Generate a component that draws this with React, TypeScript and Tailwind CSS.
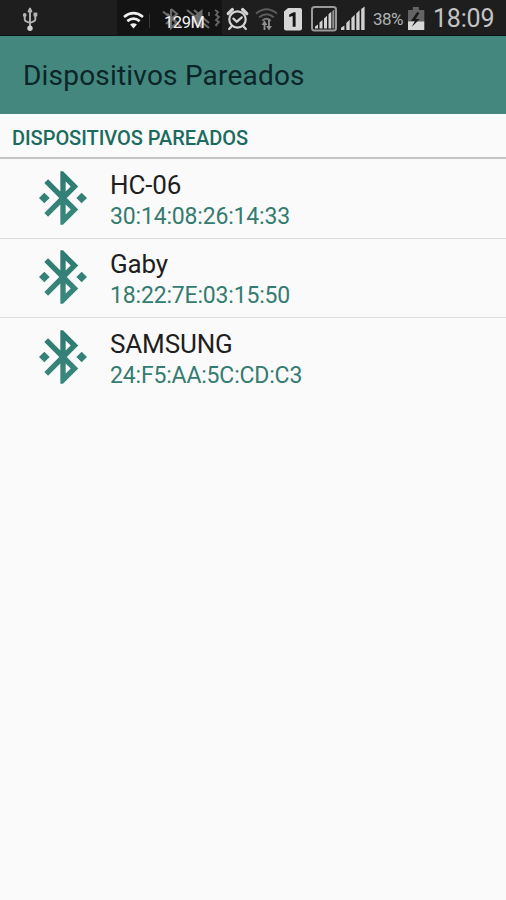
const devices = [
  { name: 'HC-06', address: '30:14:08:26:14:33' },
  { name: 'Gaby', address: '18:22:7E:03:15:50' },
  { name: 'SAMSUNG', address: '24:F5:AA:5C:CD:C3' },
];

function UsbIcon() {
  return (
    <svg width="18" height="36" viewBox="21 0 18 36" fill="none" stroke="#b4b4b4" strokeWidth="1.9" strokeLinejoin="round">
      <path d="M30 10v18M24.7 15v4.2q0 1.6 1.6 2.2l3.7 1.6M35.3 14v5.2q0 1.6-1.6 2.2L30 23" />
      <path d="M30 8.5l1.4 3h-2.8z" fill="#b4b4b4" />
      <circle cx="24.7" cy="15" r="1.9" fill="#b4b4b4" stroke="none" />
      <rect x="33.5" y="12.6" width="3.8" height="3.8" fill="#b4b4b4" stroke="none" />
      <circle cx="30" cy="28.3" r="2.7" fill="#d0d0d0" stroke="none" />
    </svg>
  );
}

function WifiIcon() {
  return (
    <svg width="36" height="36" viewBox="117 0 36 36" fill="none" stroke="#f0f0f0" strokeWidth="2.6">
      <path d="M124 17q9.5-7.6 19 0M127.3 21.1q6.2-4.8 12.4 0" />
      <path d="M133.5 28.4l-3.4-3.9q3.4-2.6 6.8 0z" fill="#f0f0f0" stroke="none" />
      <path d="M149.5 14v14" stroke="#363636" strokeWidth="1" />
    </svg>
  );
}

function MutedIcons() {
  return (
    <svg className="block" width="69" height="36" viewBox="153 0 69 36" fill="none" stroke="#6b6b6b" strokeWidth="2.2">
      <path d="M163 11.5l19 16M166 24l8.5-8M171 9v19l6-5.5-10-9M171 9l6 5-9 8" />
      <path d="M193 17l9.5-8v20L193 22z" fill="#707070" stroke="none" />
      <path d="M187 10l22 18M194 10l15 13" />
      <path d="M209 12v4M215 10l3 2-2 3 3 2-3 3 3 2-3 3 1 1" stroke="#666666" strokeWidth="1.8" />
    </svg>
  );
}

function AlarmIcon() {
  return (
    <svg width="30" height="36" viewBox="222 0 30 36" fill="none" stroke="#d4d4d4" strokeWidth="2.2" strokeLinecap="round">
      <circle cx="237.5" cy="19.5" r="8.2" />
      <path d="M233.4 18.6l3.4 3.1 5-4.4M231.5 26.5l-2.4 2.5M243.5 26.5l2.4 2.5" />
      <path d="M228.2 13.6l4.2-4.1M246.8 13.6l-4.2-4.1" strokeWidth="3.2" />
    </svg>
  );
}

function WifiTransferIcon() {
  return (
    <svg width="31" height="36" viewBox="252 0 31 36" fill="none" stroke="#5c5c5c" strokeWidth="2">
      <path d="M256 13.5q10.5-8.5 21 0M259.2 17.3q7.3-6.2 14.6 0" />
      <path d="M262.3 20.7q4.2-3.8 8.4 0" stroke="#777" />
      <path d="M264.5 30v-7M269 20v8" stroke="#929292" strokeWidth="1.8" />
      <path d="M261.6 25l2.9-4.5 2.9 4.5zM266.1 26l2.9 4.5 2.9-4.5z" fill="#929292" stroke="none" />
    </svg>
  );
}

function SimIcon() {
  return (
    <svg width="26" height="36" viewBox="283 0 26 36">
      <path d="M284 11.5l4-3.5h12q2 0 2 2v18.5q0 2-2 2h-14q-2 0-2-2z" fill="#d6d6d6" />
      <path d="M289.2 14.4l4.4-2.1h2v14.5h-2.9V15.9l-3.5 1z" fill="#151515" />
    </svg>
  );
}

function SignalIcons() {
  return (
    <svg width="61" height="36" viewBox="309 0 61 36">
      <rect x="312" y="7" width="24" height="23.5" rx="2.5" fill="none" stroke="#9a9a9a" strokeWidth="2" />
      <g fill="#d2d2d2">
        <path d="M315 28.5v-2l3-2v4zM319.5 28.5v-6l3-2.6v8.6zM324 28.5v-10l3-2.8v12.8zM328.5 28.5V14.2l2.8-2.5v16.8z" />
        <path d="M332.3 28.5V11l2-1.5v19z" fill="#929292" />
        <path d="M341 30v-2.2l3.4-2.4V30zM346.3 30v-7l3.4-3.3V30zM351.4 30V18l3.3-3.2V30zM356.3 30V13.5l3.3-3.3V30zM361.2 30V9l3.4-2.5V30z" />
      </g>
    </svg>
  );
}

function BatteryIcon() {
  return (
    <svg width="28" height="36" viewBox="404 0 28 36">
      <path d="M412.8 7h6v3h5.5v12H408V10h4.8z" fill="#646464" />
      <path d="M408 21.5h16.3V30H408z" fill="#d8d8d8" />
      <path d="M417.2 12l-6.3 9h4l-3.2 6 8-8h-4.2l4-6z" fill="#191919" />
    </svg>
  );
}

function BluetoothIcon() {
  return (
    <svg className="block shrink-0" width="64" height="64" viewBox="0 0 24 24">
      <defs>
        <linearGradient id="teal" x1="0" y1="0" x2="0" y2="1">
          <stop offset="0" stopColor="#2c7a70" />
          <stop offset="1" stopColor="#3a887e" />
        </linearGradient>
      </defs>
      <path
        fill="url(#teal)"
        d="M7 12l-2-2-2 2 2 2 2-2zm10.71-4.29L12 2h-1v7.59L6.41 5 5 6.41 10.59 12 5 17.59 6.41 19 11 14.41V22h1l5.71-5.71-4.3-4.29 4.3-4.29zM13 5.83l1.88 1.88L13 9.59V5.83zm1.88 10.46L13 18.17v-3.76l1.88 1.88zM19 10l-2 2 2 2 2-2-2-2z"
      />
    </svg>
  );
}

export default function App() {
  return (
    <div className="h-[900px] w-[506px] overflow-hidden bg-[#fafafa] font-['Roboto',sans-serif]">
      <header className="flex h-9 items-center whitespace-nowrap border-b border-[#0d1414] bg-[#1e1e1e] pl-[21px]">
        <UsbIcon />
        <div className="relative ml-[78px] flex bg-[#131313]">
          <WifiIcon />
          <MutedIcons />
          <span className="absolute left-[47px] top-[13px] text-[16.5px] leading-[19px] tracking-[-0.4px] text-[#f2f2f2]">129M</span>
        </div>
        <AlarmIcon />
        <WifiTransferIcon />
        <SimIcon />
        <SignalIcons />
        <span className="ml-[3px] w-[31px] pt-[3px] text-[17px] leading-5 tracking-[-0.6px] text-[#b2b2b2]">38%</span>
        <BatteryIcon />
        <span className="ml-px pt-[3px] text-[25px] leading-8 tracking-[-0.2px] text-[#c4c4c4]">18:09</span>
      </header>
      <div className="flex h-[78px] items-center bg-[#43877f] pl-[23px]">
        <h1 className="whitespace-nowrap pt-[2px] text-[28px] leading-9 tracking-[0.2px] text-[#0c2527]">Dispositivos Pareados</h1>
      </div>
      <h2 className="flex h-[45px] items-center whitespace-nowrap border-b-2 border-[#c5c5c5] pl-3 pt-1 text-[20px] font-medium tracking-[-0.05px] text-[#1b6b5f]">
        DISPOSITIVOS PAREADOS
      </h2>
      <ul>
        {devices.map((device) => (
          <li key={device.name} className="flex h-[79.5px] items-start border-b border-[#dedede] pl-[30.5px] pt-[6.5px] last:border-b-0">
            <BluetoothIcon />
            <div className="ml-[15.5px] whitespace-nowrap pt-[3px]">
              <p className="text-[26px] leading-8 tracking-[-0.15px] text-[#1f1f1f]">{device.name}</p>
              <p className="text-[23px] leading-8 tracking-[-0.18px] text-[#347b71]">{device.address}</p>
            </div>
          </li>
        ))}
      </ul>
    </div>
  );
}
